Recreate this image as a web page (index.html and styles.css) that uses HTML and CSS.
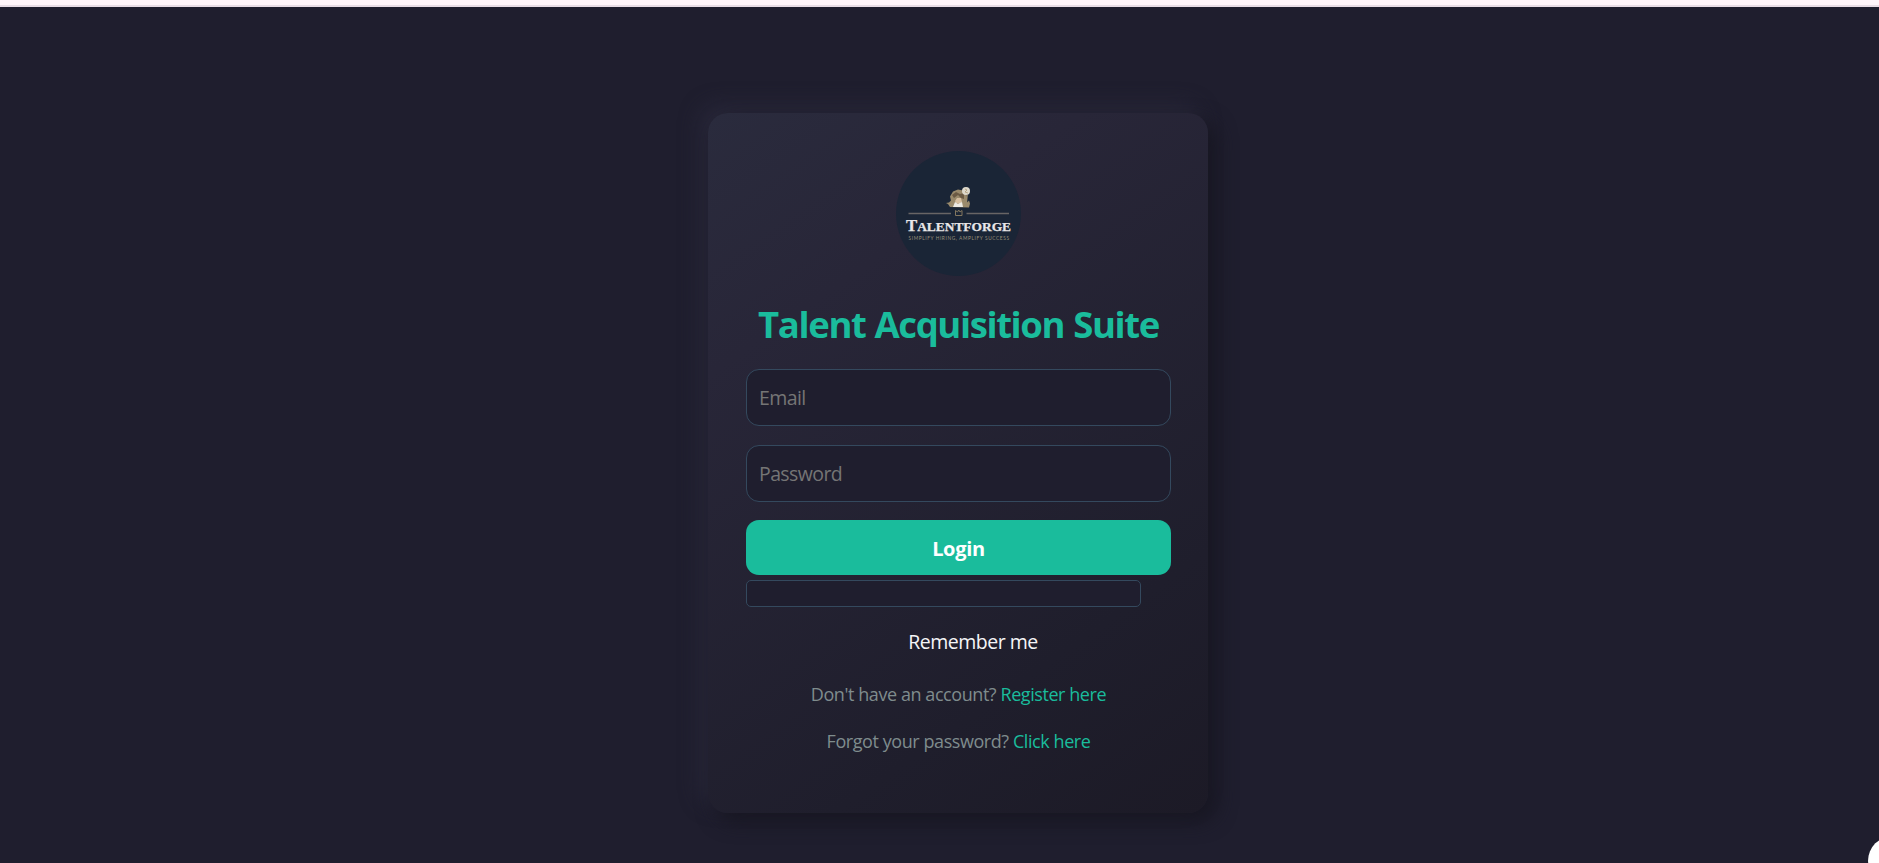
FILE: index.html
```html
<!DOCTYPE html>
<html lang="en">
<head>
<meta charset="utf-8">
<title>Talent Acquisition Suite</title>
<link rel="stylesheet" href="styles.css">
</head>
<body>
<div class="top-strip"></div>
<main class="page">
  <form class="card">
    <svg class="logo" viewBox="0 0 125 125" role="img" aria-label="Talentforge">
      <circle cx="62.5" cy="62.5" r="62.5" fill="#1a2536"/>
      <path d="M54 56l-2-3-2-1 3-.5 2-2-1-4 3-5 5-2 5 1 3 4 0 5 1 3 2-2 1 3-1 4z" fill="#9a8a6c"/>
      <path d="M56 44l4-3 4 2 4-1 0 6-3-1-3-3-4 3z" fill="#6b5a44"/>
      <path d="M59 50l2-3h4l1 4-2 2-4-1z" fill="#d6bea0"/>
      <path d="M57 56l2-5 3 2 4-2 1 5z" fill="#eceae4"/>
      <path d="M70 55l1-11" stroke="#9a8a6c" stroke-width="1.6"/>
      <circle cx="70" cy="40" r="4" fill="#ddd8cb"/>
      <path d="M69 38l2 1-2 2 3 1" fill="none" stroke="#ae9c78" stroke-width=".8"/>
      <path d="M12.500 62.500h42.500M70.500 62.500h42.500" stroke="#686565" stroke-width="1.300"/>
      <path d="M59.500 64.500h6.500v-5l-2 1.500-1.300-2-1.200 2-2-1.500z" fill="none" stroke="#83775f" stroke-width="1"/>
      <text class="logo-name" x="10" y="79.800" textLength="105" lengthAdjust="spacingAndGlyphs"><tspan class="logo-initial">T</tspan>ALENTFORGE</text>
      <text class="logo-tag" x="12.500" y="89" textLength="100.500">SIMPLIFY HIRING, AMPLIFY SUCCESS</text>
    </svg>
    <h1 class="title">Talent Acquisition Suite</h1>
    <input class="field" type="email" placeholder="Email">
    <input class="field" type="password" placeholder="Password">
    <button class="login" type="button">Login</button>
    <div class="remember-box"></div>
    <label class="remember">Remember me</label>
    <p class="hint register">Don't have an account? <a class="link">Register here</a></p>
    <p class="hint forgot">Forgot your password? <a class="link">Click here</a></p>
  </form>
</main>
<div class="chat-bubble"></div>
</body>
</html>
```
FILE: styles.css
```css
* { box-sizing: border-box; }
body {
  margin: 0;
  height: 863px;
  overflow: hidden;
  background: #1f1e2e;
  font-family: "Segoe UI", "Open Sans", "Noto Sans", sans-serif;
}
.top-strip {
  height: 7px;
  background: #fff5fa;
  border-bottom: 2px solid #e9dde6;
}
.page {
  display: flex;
  justify-content: center;
  padding: 106px 0 0 37px;
}
.card {
  display: flex;
  flex-direction: column;
  align-items: center;
  width: 500px;
  height: 700px;
  padding: 38px 37px 0 38px;
  border-radius: 20px;
  background: linear-gradient(145deg, #2a2b3d, #282638 25%, #1f1e2c 75%, #1c1a26);
  box-shadow: 8px 8px 20px #171621, -8px -8px 20px #29283a;
}
.logo {
  flex: none;
  width: 125px;
  height: 125px;
}
.logo-name {
  font: bold 12.800px "Liberation Serif", serif;
  fill: #e9e7e8;
  stroke: #e9e7e8;
  stroke-width: 0.250px;
}
.logo-initial { font-size: 16px; }
.logo-tag {
  font: 4.800px "Lato", sans-serif;
  fill: #9a917b;
}
.title {
  margin: 23px 0 20px;
  height: 50px;
  line-height: 50px;
  font-size: 36.500px;
  font-weight: 700;
  letter-spacing: -1.4px;
  word-spacing: 1px;
  color: #1abc9c;
  white-space: nowrap;
}
.field {
  flex: none;
  width: 425px;
  height: 57px;
  margin: 0 0 19px;
  padding: 0 12px;
  border: 1px solid #34495e;
  border-radius: 13px;
  background: #1f1e2e;
  color: #fff;
  font: 19.500px "Segoe UI", "Open Sans", sans-serif;
  letter-spacing: -0.6px;
}
.field::placeholder { color: #757575; }
.login {
  flex: none;
  width: 425px;
  height: 55px;
  margin-top: -1px;
  padding: 2px 0 0;
  border: 0;
  border-radius: 13px;
  background: #1abc9c;
  color: #fff;
  font: 700 20px "Segoe UI", "Open Sans", sans-serif;
  letter-spacing: -0.3px;
}
.remember-box {
  flex: none;
  align-self: flex-start;
  width: 395px;
  height: 27px;
  margin-top: 5px;
  border: 1px solid #34495e;
  border-radius: 5px;
  background: #1f1e2e;
}
.remember {
  margin: 21px 0 0 29px;
  line-height: 28px;
  font-size: 19.500px;
  letter-spacing: -0.5px;
  color: #f5f5f7;
}
.hint {
  margin: 0;
  line-height: 28px;
  font-size: 18px;
  letter-spacing: -0.43px;
  color: #7f8c8d;
  white-space: nowrap;
}
.register { margin-top: 24px; }
.forgot { margin-top: 19px; }
.link { color: #1abc9c; }
.chat-bubble {
  position: absolute;
  right: -39px;
  bottom: -23px;
  width: 50px;
  height: 50px;
  border-radius: 50%;
  background: #fff;
}
```
